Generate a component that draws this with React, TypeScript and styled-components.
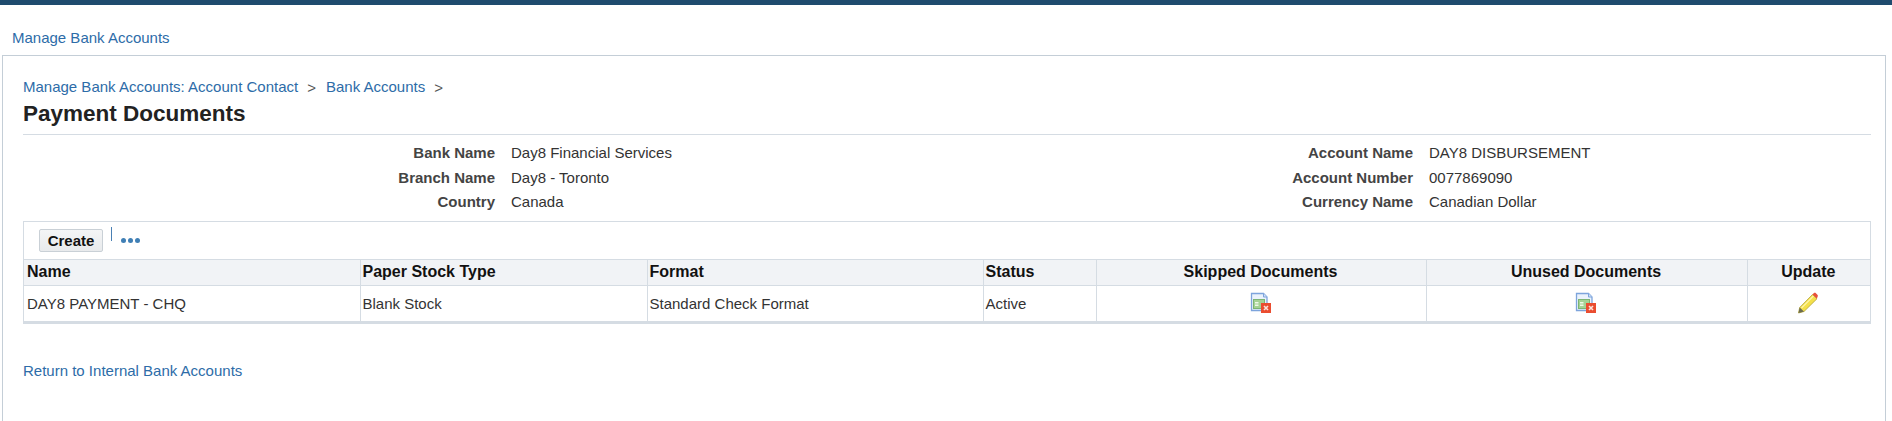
import React from "react";
import styled, { createGlobalStyle } from "styled-components";

type detail = {
  label: string,
  value: string,
}

const left_details: detail[] = [
  { label: "Bank Name", value: "Day8 Financial Services" },
  { label: "Branch Name", value: "Day8 - Toronto" },
  { label: "Country", value: "Canada" },
];

const right_details: detail[] = [
  { label: "Account Name", value: "DAY8 DISBURSEMENT" },
  { label: "Account Number", value: "0077869090" },
  { label: "Currency Name", value: "Canadian Dollar" },
];

const GlobalStyle = createGlobalStyle`
  html, body {
    margin: 0;
    padding: 0;
    background: #fff;
    font-family: "Liberation Sans", Arial, sans-serif;
    font-size: 15px;
    color: #333;
  }
`;

const Page = styled.div`
  height: 421px;
  overflow: hidden;
  display: flex;
  flex-direction: column;
`;

const TopBar = styled.div`
  height: 5px;
  background: #1f4b6e;
`;

const Link = styled.a`
  color: #2d6ca8;
  font-size: 15px;
  line-height: 16px;
  cursor: pointer;
`;

const NavRow = styled.div`
  height: 50px;
  box-sizing: border-box;
  padding: 24px 0 0 12px;
`;

const Panel = styled.div`
  flex: 1;
  box-sizing: border-box;
  margin: 0 6px 0 2px;
  border: 1px solid #c4ced7;
  border-bottom: none;
  padding: 23px 14px 0 20px;
`;

const Breadcrumbs = styled.div`
  display: flex;
  line-height: 18px;
`;

const Chevron = styled.span`
  color: #555;
  margin: 0 10px 0 9px;
`;

const Title = styled.h1`
  margin: 5px 0 0;
  padding-bottom: 8px;
  font-size: 22.5px;
  line-height: 24px;
  font-weight: bold;
  color: #222;
  border-bottom: 1px solid #d5dce3;
`;

const Details = styled.div`
  display: flex;
  padding-top: 5.5px;
  margin-bottom: 6.5px;
`;

const DetailColumn = styled.dl<{ $labelWidth: number }>`
  flex: 1;
  margin: 0;
  display: grid;
  grid-template-columns: ${(p) => p.$labelWidth}px 1fr;
  grid-auto-rows: 24.5px;
  column-gap: 16px;
  align-items: center;
`;

const DetailLabel = styled.dt`
  font-weight: bold;
  text-align: right;
  color: #444;
`;

const DetailValue = styled.dd`
  margin: 0;
  color: #333;
`;

const TableBox = styled.div`
  border: 1px solid #d5dce3;
  border-bottom: 3px solid #d5dce3;
`;

const Toolbar = styled.div`
  height: 37px;
  display: flex;
  align-items: flex-start;
  padding: 7px 0 0 15px;
  box-sizing: border-box;
`;

const Button = styled.button`
  width: 64px;
  height: 23px;
  padding: 0;
  font-family: inherit;
  font-size: 15px;
  font-weight: bold;
  color: #111;
  background: linear-gradient(#f4f5f6, #e8eaec);
  border: 1px solid #c9d0d6;
  border-radius: 2px;
`;

const Separator = styled.span`
  width: 1px;
  height: 14px;
  margin: -2px 0 0 8px;
  background: #4a80b4;
`;

const Dots = styled.div`
  display: flex;
  gap: 2px;
  margin: 9px 0 0 9px;
  span {
    width: 5px;
    height: 5px;
    border-radius: 50%;
    background: #3f7fb5;
  }
`;

const Table = styled.table`
  width: 100%;
  table-layout: fixed;
  border-collapse: collapse;
`;

const HeaderCell = styled.th<{ $center?: boolean }>`
  height: 25px;
  padding: 0 3px 0 2px;
  font-size: 16px;
  font-weight: bold;
  color: #111;
  background: #f1f3f6;
  text-align: ${(p) => (p.$center ? "center" : "left")};
  border-top: 1px solid #d5dce3;
  border-bottom: 1px solid #d5dce3;
  border-left: 1px solid #d5dce3;
  &:first-child {
    border-left: none;
    padding-left: 3px;
  }
`;

const Cell = styled.td<{ $center?: boolean }>`
  height: 35px;
  padding: 0 3px 0 2px;
  font-size: 15px;
  color: #333;
  text-align: ${(p) => (p.$center ? "center" : "left")};
  border-left: 1px solid #d5dce3;
  &:first-child {
    border-left: none;
    padding-left: 3px;
  }
  svg {
    display: inline-block;
    vertical-align: middle;
  }
`;

const ReturnRow = styled.div`
  margin-top: 38px;
`;

const SkippedIcon = () => (
  <svg width="22" height="22" viewBox="0 0 22 22">
    <path d="M1.5 1.5h12l3.5 3.500v13.500h-15.500z" fill="#eaf2fc" stroke="#7da4dc" strokeWidth="1.300" />
    <path d="M13.500 1.500v3.500h3.500" fill="#cfe0f6" stroke="#7da4dc" />
    <rect x="3.500" y="7.500" width="11" height="9" fill="#a5d295" stroke="#7cb574" />
    <rect x="5" y="10" width="3.500" height="1.500" fill="#eef8e8" />
    <rect x="5" y="12.500" width="3.500" height="1.500" fill="#eef8e8" />
    <rect x="11" y="11" width="10" height="10" fill="#ea4d30" />
    <path d="M14 14l4 4M18 14l-4 4" stroke="#fbe3dc" strokeWidth="1.600" />
  </svg>
);

const PencilIcon = () => (
  <svg width="22" height="22" viewBox="0 0 22 22">
    <path d="M1.500 21l1.200-5.500L15.500 2.500l4.500 4.200L7 19.500z" fill="#f4e04a" stroke="#b3a33a" strokeWidth="0.800" />
    <path d="M4.500 16L16.500 4" stroke="#fdf5a8" strokeWidth="1.300" />
    <path d="M1.500 21l1.200-5.500 4.300 4z" fill="#6b6b50" />
    <path d="M15.500 2.500l1.200-1.200c.8-.6 1.600-.6 2.200 0l1.500 1.500c.6.700.6 1.500 0 2.200L20 6.700z" fill="#e8503a" />
  </svg>
);

const DetailList = ({ items, labelWidth }: { items: detail[], labelWidth: number }) => (
  <DetailColumn $labelWidth={labelWidth}>
    {items.map((item) => (
      <React.Fragment key={item.label}>
        <DetailLabel>{item.label}</DetailLabel>
        <DetailValue>{item.value}</DetailValue>
      </React.Fragment>
    ))}
  </DetailColumn>
);

export default function App() {
  return (
    <Page>
      <GlobalStyle />
      <TopBar />
      <NavRow>
        <Link>Manage Bank Accounts</Link>
      </NavRow>
      <Panel>
        <Breadcrumbs>
          <Link>Manage Bank Accounts: Account Contact</Link>
          <Chevron>&gt;</Chevron>
          <Link>Bank Accounts</Link>
          <Chevron>&gt;</Chevron>
        </Breadcrumbs>
        <Title>Payment Documents</Title>
        <Details>
          <DetailList items={left_details} labelWidth={472} />
          <DetailList items={right_details} labelWidth={466} />
        </Details>
        <TableBox>
          <Toolbar>
            <Button>Create</Button>
            <Separator />
            <Dots>
              <span />
              <span />
              <span />
            </Dots>
          </Toolbar>
          <Table>
            <colgroup>
              <col style={{ width: 336 }} />
              <col style={{ width: 287 }} />
              <col style={{ width: 336 }} />
              <col style={{ width: 113 }} />
              <col style={{ width: 330 }} />
              <col style={{ width: 321 }} />
              <col />
            </colgroup>
            <thead>
              <tr>
                <HeaderCell>Name</HeaderCell>
                <HeaderCell>Paper Stock Type</HeaderCell>
                <HeaderCell>Format</HeaderCell>
                <HeaderCell>Status</HeaderCell>
                <HeaderCell $center>Skipped Documents</HeaderCell>
                <HeaderCell $center>Unused Documents</HeaderCell>
                <HeaderCell $center>Update</HeaderCell>
              </tr>
            </thead>
            <tbody>
              <tr>
                <Cell>DAY8 PAYMENT - CHQ</Cell>
                <Cell>Blank Stock</Cell>
                <Cell>Standard Check Format</Cell>
                <Cell>Active</Cell>
                <Cell $center><SkippedIcon /></Cell>
                <Cell $center><SkippedIcon /></Cell>
                <Cell $center><PencilIcon /></Cell>
              </tr>
            </tbody>
          </Table>
        </TableBox>
        <ReturnRow>
          <Link>Return to Internal Bank Accounts</Link>
        </ReturnRow>
      </Panel>
    </Page>
  );
}
